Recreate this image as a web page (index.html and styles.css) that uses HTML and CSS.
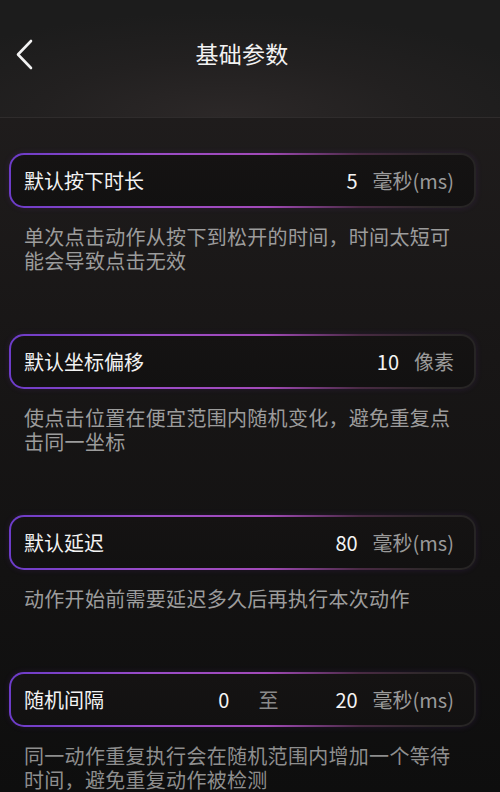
FILE: index.html
```html
<!DOCTYPE html>
<html lang="zh-CN">
<head>
    <meta charset="UTF-8">
    <meta name="viewport" content="width=device-width, initial-scale=1.0">
    <title>基础参数</title>
    <link rel="stylesheet" href="styles.css">
</head>
<body>
<div class="header">
    <svg class="back" width="20" height="32" viewBox="0 0 20 32">
        <path d="M15 3 L2 16.5 L15 30" fill="none" stroke="#f2f2f2" stroke-width="2.6" stroke-linecap="round" stroke-linejoin="round"/>
    </svg>
    <h1>基础参数</h1>
</div>

<div class="params">
    <div class="param">
        <div class="param-row">
            <span class="param-name">默认按下时长</span>
            <span class="param-value">5</span>
            <span class="param-unit">毫秒(ms)</span>
        </div>
        <p class="param-desc">单次点击动作从按下到松开的时间，时间太短可能会导致点击无效</p>
    </div>

    <div class="param">
        <div class="param-row">
            <span class="param-name">默认坐标偏移</span>
            <span class="param-value">10</span>
            <span class="param-unit">像素</span>
        </div>
        <p class="param-desc">使点击位置在便宜范围内随机变化，避免重复点击同一坐标</p>
    </div>

    <div class="param">
        <div class="param-row">
            <span class="param-name">默认延迟</span>
            <span class="param-value">80</span>
            <span class="param-unit">毫秒(ms)</span>
        </div>
        <p class="param-desc">动作开始前需要延迟多久后再执行本次动作</p>
    </div>

    <div class="param">
        <div class="param-row">
            <span class="param-name">随机间隔</span>
            <span class="param-value param-value-from">0</span>
            <span class="param-sep">至</span>
            <span class="param-value param-value-to">20</span>
            <span class="param-unit">毫秒(ms)</span>
        </div>
        <p class="param-desc">同一动作重复执行会在随机范围内增加一个等待时间，避免重复动作被检测</p>
    </div>
</div>
</body>
</html>
```

FILE: styles.css
```css
body {
    margin: 0;
    width: 500px;
    height: 792px;
    overflow: hidden;
    font-family: "Noto Sans CJK SC", "Noto Sans", sans-serif;
    color: #f0f0f0;
    background: linear-gradient(180deg, #221f1f 0%, #181616 45%, #0e0e0e 100%);
}

.header {
    height: 117px;
    display: flex;
    align-items: center;
    justify-content: center;
    position: relative;
    background: radial-gradient(ellipse 70% 90% at 45% 100%, #2c2828 0%, #222020 55%, #1c1c1c 100%);
    box-shadow: 0 1px 0 #2f2c2c;
}

.back {
    position: absolute;
    left: 16px;
    top: 38px;
}

.header h1 {
    margin: 0 16px 12px 0;
    font-size: 23px;
    font-weight: 400;
    color: #f2f2f2;
    letter-spacing: 0.3px;
}

.params {
    padding: 36px 24px 0 9px;
}

.param-row {
    height: 51px;
    display: flex;
    align-items: center;
    padding: 0 20px 0 13px;
    border: 2px solid transparent;
    border-radius: 15px;
    background:
        linear-gradient(#151313, #121111) padding-box,
        linear-gradient(90deg, #6c3cc8 0%, #9a4cc8 30%, #a24ab8 55%, #4a2a44 75%, #2c2828 90%, #262424 100%) border-box;
    box-shadow: 0 0 6px rgba(130, 60, 200, 0.15);
}

.param-name {
    flex: 1;
    font-size: 20px;
    color: #f2f2f2;
}

.param-value {
    font-size: 20px;
    color: #f4f4f4;
    margin-right: 15px;
}

.param-value-from {
    margin-right: 29px;
}

.param-sep {
    font-size: 20px;
    color: #8a8a8a;
}

.param-value-to {
    margin-left: 57px;
}

.param-unit {
    font-size: 20px;
    color: #9a9a9a;
}

.param-desc {
    max-width: 432px;
    margin: 17px 0 61px;
    padding: 0 0 0 15px;
    font-size: 20px;
    line-height: 24px;
    letter-spacing: 0.3px;
    color: #9c9c9c;
}

.param:last-child .param-desc {
    margin-bottom: 0;
    color: #8e8e8e;
}
```
